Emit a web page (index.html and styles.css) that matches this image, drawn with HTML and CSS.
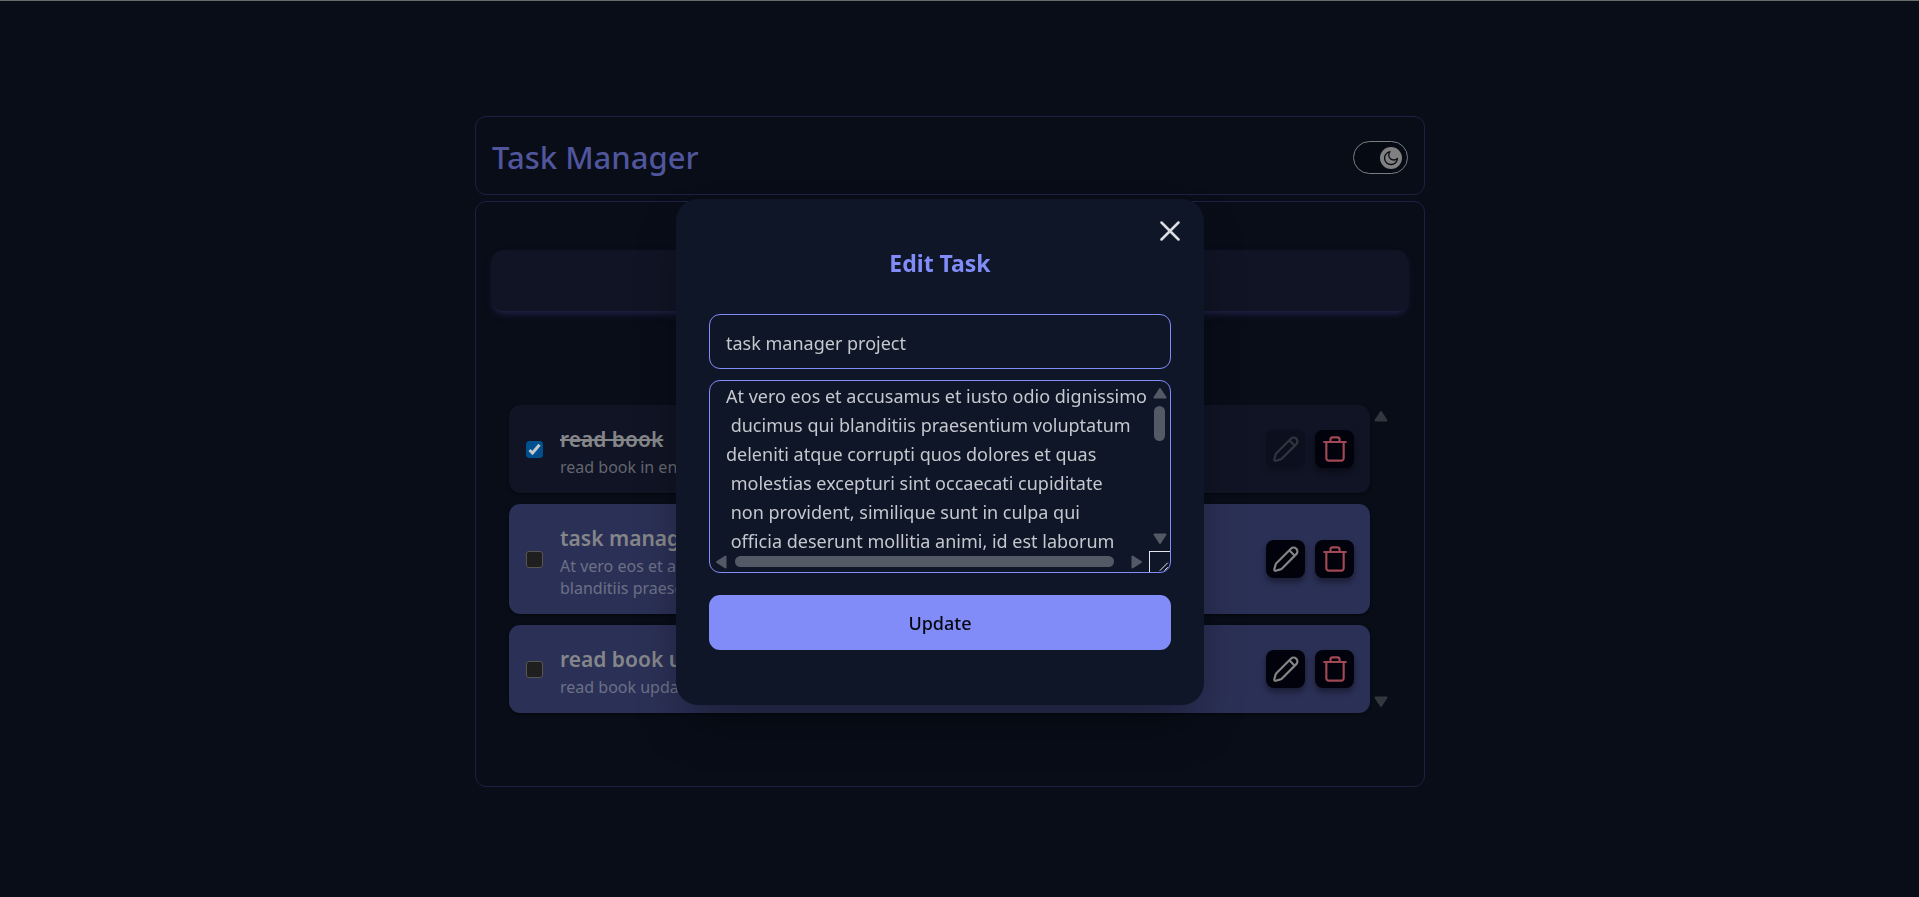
FILE: index.html
```html
<!DOCTYPE html>
<html lang="en">
<head>
<meta charset="utf-8">
<title>Task Manager</title>
<link rel="stylesheet" href="styles.css">
</head>
<body>
<svg class="sprite" aria-hidden="true">
  <symbol id="pencil" viewBox="0 0 24 24"><path d="M16.500 2.500a3.500 3.500 0 0 1 5 5L8.300 20.700Q7.700 21.300 6.800 21.600L2.600 22.800Q1 23 1.200 21.400L2.400 17.200Q2.700 16.300 3.300 15.700zM15.300 4.200l4.500 4.500"/></symbol>
  <symbol id="trash" viewBox="0 0 24 24"><path d="M2 5.500h20M4 5.500v15a2.200 2.200 0 0 0 2.200 2.200h11.600a2.200 2.200 0 0 0 2.200-2.200v-15M7.800 5V3.300a2 2 0 0 1 2-2h4.400a2 2 0 0 1 2 2V5"/></symbol>
  <symbol id="arrow" viewBox="0 0 14 12"><path d="M7 2 12.500 10.500H1.500z"/></symbol>
</svg>
<main class="app">
  <header class="panel header">
    <h1 class="brand">Task Manager</h1>
    <button class="toggle" type="button" aria-label="Toggle theme">
      <span class="knob"><svg class="moon" viewBox="0 0 24 24"><path d="M10.500 2.500A9.700 9.700 0 1 0 21.700 12.500 6.800 6.800 0 0 1 10.500 2.500z"/></svg></span>
    </button>
  </header>
  <section class="panel board">
    <button class="add" type="button" aria-label="Add task"></button>
    <div class="scroller">
      <ul class="tasks">
        <li class="task done">
          <input class="check" type="checkbox" id="t1" checked>
          <svg class="tick" viewBox="0 0 17 17" aria-hidden="true"><path d="M3.500 9 6.500 12 13.500 3.800"/></svg>
          <label class="info" for="t1"><span class="title">read book</span><span class="desc">read book in english</span></label>
          <button class="act edit" type="button" aria-label="Edit" disabled><svg class="icon"><use href="#pencil"/></svg></button>
          <button class="act del" type="button" aria-label="Delete"><svg class="icon"><use href="#trash"/></svg></button>
        </li>
        <li class="task">
          <input class="check" type="checkbox" id="t2">
          <label class="info" for="t2"><span class="title">task manager project</span><span class="desc">At vero eos et accusamus et iusto odio dignissimos ducimus qui<br>blanditiis praesentium voluptatum</span></label>
          <button class="act edit" type="button" aria-label="Edit"><svg class="icon"><use href="#pencil"/></svg></button>
          <button class="act del" type="button" aria-label="Delete"><svg class="icon"><use href="#trash"/></svg></button>
        </li>
        <li class="task">
          <input class="check" type="checkbox" id="t3">
          <label class="info" for="t3"><span class="title">read book update</span><span class="desc">read book update</span></label>
          <button class="act edit" type="button" aria-label="Edit"><svg class="icon"><use href="#pencil"/></svg></button>
          <button class="act del" type="button" aria-label="Delete"><svg class="icon"><use href="#trash"/></svg></button>
        </li>
      </ul>
      <div class="rail">
        <svg class="arrow"><use href="#arrow"/></svg>
        <svg class="arrow down"><use href="#arrow"/></svg>
      </div>
    </div>
  </section>
</main>
<div class="overlay">
  <form class="modal" role="dialog" aria-labelledby="modal-title">
    <button class="close" type="button" aria-label="Close"><svg class="cross" viewBox="0 0 20 20"><path d="M1.500 1.500l17 17M18.500 1.500l-17 17"/></svg></button>
    <h2 class="modal-title" id="modal-title">Edit Task</h2>
    <input class="field" type="text" aria-label="Title" value="task manager project">
    <div class="area">
      <div class="clip">
        <textarea class="text" aria-label="Description" wrap="off">At vero eos et accusamus et iusto odio dignissimos
 ducimus qui blanditiis praesentium voluptatum
deleniti atque corrupti quos dolores et quas
 molestias excepturi sint occaecati cupiditate
 non provident, similique sunt in culpa qui
 officia deserunt mollitia animi, id est laborum</textarea>
      </div>
      <div class="bar vertical"><svg class="arrow"><use href="#arrow"/></svg><span class="thumb"></span><svg class="arrow down"><use href="#arrow"/></svg></div>
      <div class="bar horizontal"><svg class="arrow left"><use href="#arrow"/></svg><span class="thumb"></span><svg class="arrow right"><use href="#arrow"/></svg></div>
      <div class="grip"><svg class="lines" viewBox="0 0 10 10"><path d="M1 8.500 8.500 1M5.500 8.500l3-3"/></svg></div>
    </div>
    <button class="update" type="submit">Update</button>
  </form>
</div>
</body>
</html>
```
FILE: styles.css
```css
* { box-sizing: border-box; }
body {
  margin: 0;
  min-height: 100vh;
  display: flex;
  align-items: center;
  justify-content: center;
  padding: 5px 19px 0 0;
  border-top: 1px solid #686c6c;
  background: #080d18;
  color: #85868a;
  font-family: "Noto Sans", "Open Sans", sans-serif;
}
button { padding: 0; border: 0; font: inherit; }
.sprite { position: absolute; width: 0; height: 0; }
svg { fill: none; stroke: currentColor; stroke-width: 2; stroke-linecap: round; stroke-linejoin: round; }

.app { width: 100%; max-width: 950px; display: flex; flex-direction: column; gap: 6px; }
.panel { border: 1px solid #1b2145; border-radius: 11px; }
.header { display: flex; align-items: center; justify-content: space-between; padding: 18px 16px 14px; }
.brand { margin: 0; font-size: 31px; line-height: 45px; font-weight: 500; color: #50559c; }
.toggle { width: 55px; height: 33px; padding: 0 5px; border: 1px solid #7b7d82; border-radius: 17px; background: #060a13; display: flex; justify-content: flex-end; align-items: center; }
.knob { width: 22px; height: 22px; border-radius: 50%; background: #808080; display: grid; place-items: center; }
.moon { width: 16px; height: 16px; color: #080c16; }

.board { padding: 48px 16px 73px; }
.add { display: block; width: 100%; height: 61px; margin-bottom: 94px; border-radius: 11px; background: #101424; box-shadow: 0 4px 7px -1px #1d2142, 0 2px 4px -2px #1d2142; }
.scroller { display: flex; margin: 0 16px 0 17px; }
.tasks { flex: 1; margin: 0; padding: 0; list-style: none; display: flex; flex-direction: column; gap: 11px; }
.task { display: flex; align-items: center; padding: 15px 16px 15px 17px; border-radius: 11px; background: #2b3056; box-shadow: 0 1px 3px #0008; }
.done { background: #101424; }
.check { appearance: none; flex: none; width: 17px; height: 17px; margin: 0; border: 1px solid #56564f; border-radius: 3px; background: #1f1f1f; }
.check:checked { border-color: #004f8e; background: #004f8e; }
.tick { width: 17px; height: 17px; margin-left: -17px; color: #c5c8cc; stroke-width: 3; stroke-linecap: butt; stroke-linejoin: miter; }
.info { flex: 1; margin-left: 17px; padding-top: 2px; }
.title, .desc { display: block; }
.title { font-size: 21px; line-height: 34px; font-weight: 600; }
.desc { font-size: 16px; line-height: 22px; color: #6c7086; }
.done .desc { color: #63666f; }
.done .title { text-decoration: line-through; }
.act { width: 39px; height: 38px; margin-left: 10px; border-radius: 8px; background: #01020b; box-shadow: 0 4px 6px #0006; display: grid; place-items: center; }
.icon { width: 26px; height: 26px; }
.edit { color: #858585; }
.edit:disabled { background: #0c0f1d; color: #32343f; box-shadow: 0 4px 6px #0002; }
.del { color: #a14856; }
.rail { width: 22px; padding: 5px 0; display: flex; flex-direction: column; justify-content: space-between; align-items: center; color: #34373e; }
.arrow { display: block; width: 14px; height: 12px; fill: currentColor; }
.down { transform: rotate(180deg); }
.left { transform: rotate(-90deg); }
.right { transform: rotate(90deg); }

.overlay { position: fixed; inset: 0; display: flex; align-items: center; justify-content: center; padding: 7px 39px 0 0; }
.modal { position: relative; width: 100%; max-width: 528px; padding: 48px 33px 55px; border-radius: 22px; background: #0e1628; box-shadow: 0 25px 50px -12px #0006; color: #c5c8cd; }
.close { position: absolute; top: 22px; right: 24px; width: 20px; height: 20px; background: none; color: #dcdde2; }
.cross { display: block; width: 20px; height: 20px; stroke-width: 2.5; }
.modal-title { margin: 0 0 35px; font-size: 23px; line-height: 32px; font-weight: 700; text-align: center; color: #818cf8; }
.field { display: block; width: 100%; height: 55px; padding: 2px 16px 0; border: 1px solid #818cf8; border-radius: 11px; background: none; color: inherit; font: inherit; font-size: 18px; }
.area { display: grid; grid-template-columns: 1fr 21px; grid-template-rows: 170px 21px; margin: 11px 0 22px; border: 1px solid #818cf8; border-radius: 11px; overflow: hidden; color: #545966; }
.clip { padding-right: 3px; }
.text { display: block; width: 100%; height: 100%; padding: 1px 0 0 16px; border: 0; background: none; resize: none; overflow: hidden; white-space: pre; color: #c5c8cd; font: inherit; font-size: 18px; line-height: 29px; }
.bar { display: flex; align-items: center; }
.vertical { flex-direction: column; padding: 6px 0; }
.vertical .thumb { width: 11px; height: 35px; margin: 7px 0 auto; }
.horizontal { padding: 0 5px 0 4px; }
.horizontal .thumb { flex: 1; height: 11px; margin: 0 16px 0 7px; }
.thumb { border-radius: 6px; background: currentColor; }
.grip { border: solid #e4e5e8; border-width: 1px 0 0 1px; display: flex; align-items: flex-end; justify-content: flex-end; }
.lines { width: 10px; height: 10px; margin-right: 1px; color: #e4e5e8; stroke-width: 1; }
.update { display: block; width: 100%; height: 55px; border-radius: 11px; background: #818cf8; color: #05070f; font-size: 18px; font-weight: 500; }
```
